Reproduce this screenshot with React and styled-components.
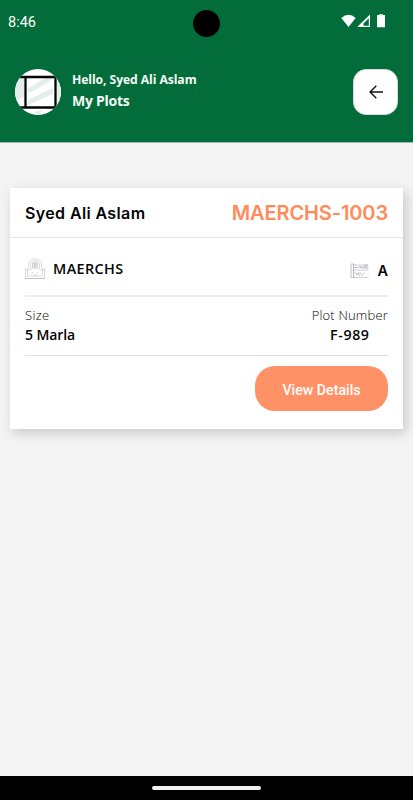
import React from 'react';
import styled, {createGlobalStyle} from 'styled-components';

const GlobalStyle = createGlobalStyle`
* {
    box-sizing: border-box;
}
body {
    margin: 0;
    background: #f4f4f4;
}
`;

const Screen = styled.div`
display: flex;
flex-flow: column;
width: 413px;
height: 800px;
overflow: hidden;
background: #f4f4f4;
font-family: "Open Sans", sans-serif;
color: #050505;
`;

const Header = styled.header`
height: 142px;
flex: none;
background: #026d3a;
box-shadow: 0 1px 0 #a3b8ab;
`;

const StatusBar = styled.div`
display: grid;
grid-template-columns: 1fr 27px 1fr;
align-items: center;
height: 46px;
padding: 0 8px 0 8px;
`;

const Camera = styled.div`
width: 27px;
height: 27px;
border-radius: 50%;
background: #000;
`;

const StatusIcons = styled.div`
display: flex;
justify-content: flex-end;
padding-right: 18px;
padding-bottom: 4px;
`;

const HeaderRow = styled.div`
display: flex;
align-items: center;
height: 69px;
padding: 23px 15px 0;
`;

const Greeting = styled.div`
display: flex;
flex-flow: column;
flex: 1;
margin-left: 11px;
padding-bottom: 4px;
`;

const BackButton = styled.button`
display: flex;
align-items: center;
justify-content: center;
width: 45px;
height: 46px;
padding: 0;
border: 1px solid #d5dfd5;
border-radius: 13px;
background: #fff;
`;

const Content = styled.main`
flex: 1;
padding: 46px 10px 0;
`;

const Card = styled.section`
height: 241px;
background: #fff;
box-shadow: 3px 4px 12px rgba(0, 0, 0, 0.19);
`;

const CardHeading = styled.div`
display: flex;
align-items: center;
justify-content: space-between;
height: 50px;
padding: 0 15px;
border-bottom: 1px solid #e6e6e6;
`;

const CardBody = styled.div`
padding: 0 15px;
`;

const Row = styled.div`
display: flex;
justify-content: space-between;
height: ${props => props.$height};
padding-top: ${props => props.$top};
border-bottom: ${props => props.$line} solid ${props => props.$lineColor};
`;

const IconLabel = styled.div`
display: flex;
align-items: center;
gap: 8px;
height: 22px;
margin-top: ${props => props.$drop || 0};
`;

const Field = styled.div`
display: flex;
flex-flow: column;
align-items: ${props => props.$align || 'flex-start'};
`;

const Text = styled.span`
font-family: ${props => props.$font || '"Open Sans"'}, sans-serif;
font-size: ${props => props.$size};
font-weight: ${props => props.$weight || 400};
line-height: ${props => props.$line || '20px'};
letter-spacing: ${props => props.$spacing || 'normal'};
color: ${props => props.$color || 'inherit'};
white-space: nowrap;
`;

const Clock = styled(Text)`
padding-bottom: 1px;
`;

const Actions = styled.div`
display: flex;
justify-content: flex-end;
padding-top: 10px;
`;

const DetailsButton = styled.button`
width: 133px;
height: 45px;
padding: 2px 0 0;
border: 0;
border-radius: 20px;
background: #ff9166;
`;

const NavBar = styled.footer`
display: flex;
justify-content: center;
flex: none;
height: 24px;
padding-top: 10px;
background: #000;
`;

const NavHandle = styled.div`
width: 109px;
height: 4px;
border-radius: 2px;
background: #f0f0f0;
`;

function Avatar() {
    return (
        <svg width="46" height="46" viewBox="0 0 46 46">
            <clipPath id="avatar"><circle cx="23" cy="23" r="23" /></clipPath>
            <g clipPath="url(#avatar)">
                <rect width="46" height="46" fill="#fff" />
                <path d="M12 20L30 9H38L31 15L14 24ZM13 31L38 19V25L20 33L12 37ZM40 0H46V46H40ZM0 9H9V28L0 32ZM20 43L26 41V46H20Z" fill="#e4efea" />
                <path d="M5 8H40.5V38.5H5M10.5 8V39" fill="none" stroke="#050505" strokeWidth="2.3" />
            </g>
        </svg>
    );
}

function SignalIcons() {
    return (
        <svg width="46" height="14" viewBox="0 0 46 14" fill="#fff">
            <path d="M0.3 4Q7.5 -2.6 14.7 4L7.5 13Z" />
            <path fillRule="evenodd" d="M29 0.5V13H16.2ZM27.8 4.2L22.5 9.6V11.7H27.8Z" />
            <path d="M38.2 1V0.3H42V1H44V13.3H36V1Z" />
        </svg>
    );
}

function SocietyIcon() {
    return (
        <svg width="20" height="22" viewBox="0 0 20 22" fill="none" stroke="#c8c8cb" strokeWidth="0.65">
            <path d="M3.5 10V6Q4 1 10 .7Q16 1 16.5 6V10M5.5 10V6Q6 2.5 10 2.5Q14 2.5 14.5 6V10M7.5 10V5Q10 3 12.5 5V10" />
            <path d="M.5 10V20.5H19.5V10M.5 12H5L7 10H13L15 12H19.5M2.5 10V18H17.5V10M7 14L10 18L13 14" />
            <path d="M7 6H13M8 8H12M10 4V11" stroke="#aaaaad" />
            <path d="M0 20.5H20" stroke="#b8b8bb" />
        </svg>
    );
}

function BlockIcon() {
    return (
        <svg width="19" height="16" viewBox="0 0 19 16" fill="none" stroke="#a5a5ac" strokeWidth="0.7">
            <path d="M1 1V14.5H3.5V1ZM3.5 3L5 1.5M3.5 4.5H8L10 3.5L12 5H18.5M10 4H13L15.5 2V5M17 1V5" />
            <path d="M3.5 7H18.5M3.5 10H6L8 12L10 9.5L12 12.5L15 9M6 12L8 9.5L10 13M3.5 14.5H18.5M5 2H18" strokeDasharray="2 0.7" />
        </svg>
    );
}

export default function App() {
    return (
        <Screen>
            <GlobalStyle />
            <Header>
                <StatusBar>
                    <Clock $font="Roboto" $size="14.5px" $color="#fff">8:46</Clock>
                    <Camera />
                    <StatusIcons><SignalIcons /></StatusIcons>
                </StatusBar>
                <HeaderRow>
                    <Avatar />
                    <Greeting>
                        <Text $size="12.2px" $weight="700" $line="21px" $spacing="-0.09px" $color="#f6faf7">Hello, Syed Ali Aslam</Text>
                        <Text $size="14px" $weight="700" $line="21px" $spacing="-0.25px" $color="#f6faf7">My Plots</Text>
                    </Greeting>
                    <BackButton>
                        <svg width="14" height="14" viewBox="0 0 14 14" fill="none" stroke="#111" strokeWidth="1.4">
                            <path d="M14 7H1.2M7.3 .7L1 7L7.3 13.3" />
                        </svg>
                    </BackButton>
                </HeaderRow>
            </Header>
            <Content>
                <Card>
                    <CardHeading>
                        <Text $font="Inter" $size="16px" $weight="600" $spacing="0.38px">Syed Ali Aslam</Text>
                        <Text $font="Inter" $size="20px" $weight="600" $spacing="-0.12px" $color="#ff8b5b">MAERCHS-1003</Text>
                    </CardHeading>
                    <CardBody>
                        <Row $height="59px" $top="20px" $line="2px" $lineColor="#eeeeee">
                            <IconLabel>
                                <SocietyIcon />
                                <Text $size="14.4px" $weight="600" $spacing="0.4px">MAERCHS</Text>
                            </IconLabel>
                            <IconLabel $drop="2px">
                                <BlockIcon />
                                <Text $font="Inter" $size="14.5px" $weight="600">A</Text>
                            </IconLabel>
                        </Row>
                        <Row $height="59px" $top="8px" $line="1px" $lineColor="#e0e0e0">
                            <Field>
                                <Text $size="13px" $weight="300" $spacing="0.35px">Size</Text>
                                <Text $size="14px" $weight="600" $spacing="-0.1px">5 Marla</Text>
                            </Field>
                            <Field $align="center">
                                <Text $size="13px" $weight="300" $spacing="0.18px">Plot Number</Text>
                                <Text $size="14.2px" $weight="600" $spacing="0.6px">F-989</Text>
                            </Field>
                        </Row>
                        <Actions>
                            <DetailsButton>
                                <Text $font="Roboto" $size="14.2px" $weight="500" $color="#fff">View Details</Text>
                            </DetailsButton>
                        </Actions>
                    </CardBody>
                </Card>
            </Content>
            <NavBar><NavHandle /></NavBar>
        </Screen>
    );
}
